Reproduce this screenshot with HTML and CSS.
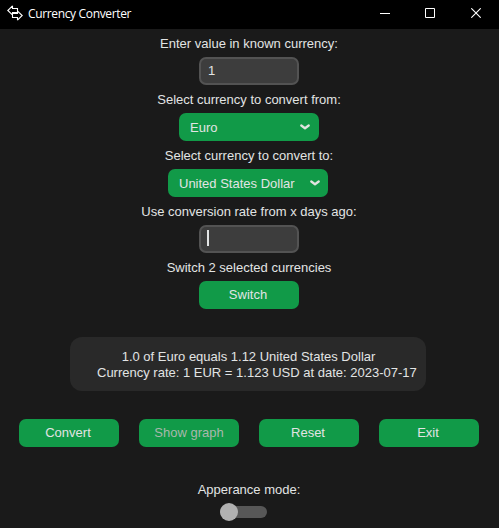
FILE: index.html
```html
<!DOCTYPE html>
<html lang="en">
<head>
<meta charset="utf-8">
<title>Currency Converter</title>
<link rel="stylesheet" href="styles.css">
</head>
<body>
<header class="titlebar">
  <svg class="logo" width="16" height="16" viewBox="0 0 16 16" fill="none" stroke="#fff" stroke-width="1.1"><path d="M5.500 .8 .8 5.500 5.500 10V7.500H10.500M5.500 .8V3.500H10.500V5.500M10.500 15.200 15.200 10.500 10.500 6V8.500H5.500M10.500 15.200V12.500H5.500V10.500"/></svg>
  <span class="title">Currency Converter</span>
  <div class="controls">
    <svg width="10" height="10"><path d="M0 5.500h10" stroke="#fff"/></svg>
    <svg width="10" height="10"><path d="M.5 .5h9v9h-9z" fill="none" stroke="#fff"/></svg>
    <svg class="close" width="10" height="10"><path d="M.3 .3l9.400 9.400M9.700 .3L.3 9.700" stroke="#fff" stroke-width="1.100"/></svg>
  </div>
</header>
<main>
  <div class="label">Enter value in known currency:</div>
  <div class="field">1</div>
  <div class="label">Select currency to convert from:</div>
  <div class="select from"><span>Euro</span><svg width="10" height="6"><path d="M1.300 1.500 5 4.200 8.700 1.500" fill="none" stroke="#e0e4e0" stroke-width="2.300" stroke-linecap="round" stroke-linejoin="round"/></svg></div>
  <div class="label">Select currency to convert to:</div>
  <div class="select to"><span>United States Dollar</span><svg width="10" height="6"><path d="M1.300 1.500 5 4.200 8.700 1.500" fill="none" stroke="#e0e4e0" stroke-width="2.300" stroke-linecap="round" stroke-linejoin="round"/></svg></div>
  <div class="label">Use conversion rate from x days ago:</div>
  <div class="field"><i class="caret"></i></div>
  <div class="label">Switch 2 selected currencies</div>
  <div class="button">Switch</div>
  <section class="result">
    <div class="amount">1.0 of Euro equals 1.12 United States Dollar</div>
    <div class="rate">Currency rate: 1 EUR = 1.123 USD at date: 2023-07-17</div>
  </section>
  <div class="actions">
    <div class="button">Convert</div>
    <div class="button disabled">Show graph</div>
    <div class="button">Reset</div>
    <div class="button">Exit</div>
  </div>
  <div class="label">Apperance mode:</div>
  <div class="switch"><i class="knob"></i></div>
</main>
</body>
</html>
```
FILE: styles.css
```css
* { box-sizing: border-box; }
body {
  margin: 0;
  width: 499px;
  height: 528px;
  overflow: hidden;
  background: #1a1a1a;
  color: #e2e4e4;
  font: 13px/30px "Liberation Sans", Arial, sans-serif;
  white-space: nowrap;
}
svg { display: block; }
.titlebar {
  display: flex;
  align-items: center;
  height: 29px;
  padding: 0 18px 3px 7px;
  background: #000;
  color: #fff;
}
.title {
  margin-left: 5px;
  padding-top: 2px;
  font: 12px/24px "Open Sans", "Noto Sans", sans-serif;
  letter-spacing: -0.35px;
}
.controls { display: flex; gap: 35px; margin-left: auto; }
.close { margin-left: 1px; }
main {
  display: flex;
  flex-direction: column;
  align-items: center;
  width: 498px;
}
.label { height: 28px; }
.field {
  display: flex;
  align-items: center;
  width: 100px;
  height: 28px;
  padding-left: 7px;
  border: 2px solid #535353;
  border-radius: 7px;
  background: #3d3d3d;
  line-height: 24px;
}
.caret { width: 2px; height: 16px; margin: -3px 0 0 -1px; background: #e2e4e4; }
.select {
  display: flex;
  align-items: center;
  justify-content: space-between;
  height: 28px;
  padding: 0 9px 0 11px;
  border-radius: 7px;
  background: #119a48;
}
.select span { padding-top: 1px; }
.from { width: 140px; }
.to { width: 160px; margin-right: 2px; padding-right: 8px; }
.button {
  width: 100px;
  height: 28px;
  padding-right: 2px;
  border-radius: 7px;
  background: #119a48;
  line-height: 28px;
  text-align: center;
}
.disabled { padding-right: 0; color: #a8b8ac; }
.result {
  width: 356px;
  height: 54px;
  margin: 28px 2px 0 0;
  padding: 12px 10px 0 27px;
  border-radius: 12px;
  background: #292929;
  line-height: 16px;
  text-align: center;
}
.amount { margin-right: 16px; }
.actions { display: flex; gap: 20px; margin: 28px 0; }
.switch {
  width: 47px;
  height: 12px;
  margin: 3px 0 0 -11px;
  border-radius: 6px;
  background: #575757;
}
.knob {
  display: block;
  width: 18px;
  height: 18px;
  border-radius: 50%;
  background: #b1b1b1;
  position: relative;
  top: -3px;
}
```
